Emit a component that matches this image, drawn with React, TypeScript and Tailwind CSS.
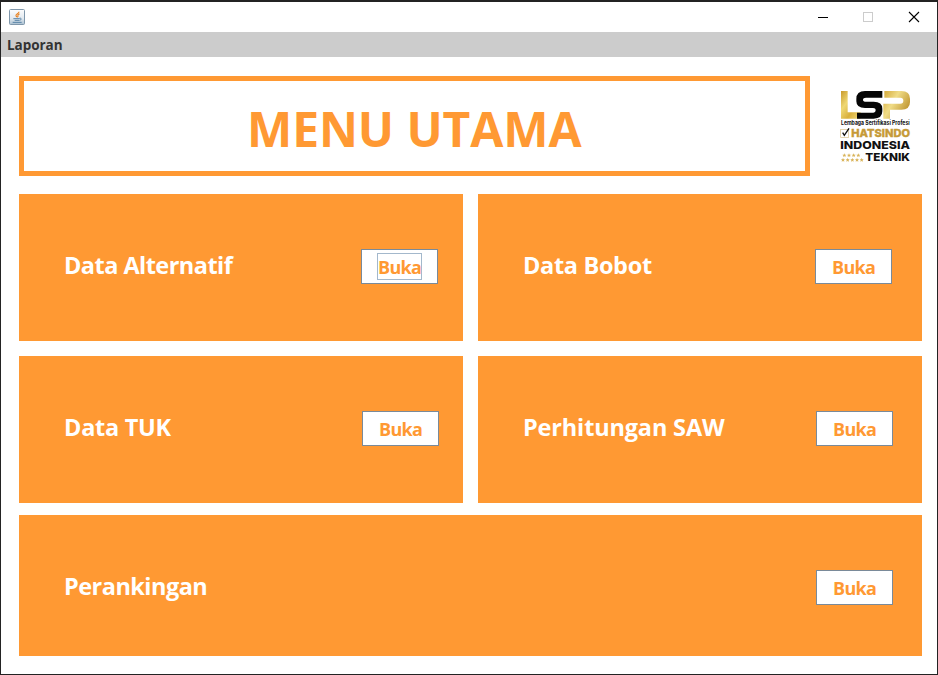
import React from "react";

const FONT = "font-['Open_Sans','Noto_Sans',sans-serif]";

function JavaIcon() {
  return (
    <svg width="16" height="16" viewBox="0 0 48 48" aria-hidden="true">
      <defs>
        <linearGradient id="java" x1="0" y1="0" x2="0" y2="1">
          <stop offset="0" stopColor="#fdfdfd" />
          <stop offset="0.6" stopColor="#e2e9ef" />
          <stop offset="1" stopColor="#a9bfd0" />
        </linearGradient>
      </defs>
      <rect x="1.5" y="1.5" width="45" height="45" rx="3" fill="url(#java)" stroke="#7f97ab" strokeWidth="3" />
      <path d="M30 8c0 5-10 7-9 12 0 2 3 3 3 5M32 15c-5 1-6 3-5 5 1 2 0 3-2 5" fill="none" stroke="#e8801f" strokeWidth="3.4" />
      <path d="M13 29h18M17 34h13M31 28c8-2 7 5 0 6M11 40h27" fill="none" stroke="#47759c" strokeWidth="2.6" />
    </svg>
  );
}

function Logo() {
  return (
    <svg className="shrink-0" width="90" height="90" viewBox="0 0 270 270" role="img" aria-label="LSP">
      <defs>
        <linearGradient id="goldL" x1="0" y1="0" x2="1" y2="1">
          <stop offset="0" stopColor="#c99a2c" />
          <stop offset="0.35" stopColor="#efd873" />
          <stop offset="0.65" stopColor="#d9b03c" />
          <stop offset="1" stopColor="#f1dc80" />
        </linearGradient>
        <linearGradient id="goldP" x1="0" y1="0" x2="1" y2="0.6">
          <stop offset="0" stopColor="#d2a637" />
          <stop offset="0.45" stopColor="#f0dc86" />
          <stop offset="1" stopColor="#bd922c" />
        </linearGradient>
      </defs>
      <path d="M33 33H53V97H92V116H33Z" fill="url(#goldL)" />
      <path d="M163 33H214Q240 33 240 56V66Q240 89 214 89H180V116H160V71H211Q220 71 220 62Q220 53 211 53H163Z" fill="url(#goldP)" />
      <path d="M157 33V53H108Q99 53 99 59Q99 65 108 65H131Q157 65 157 86V94Q157 116 131 116H81V98H130Q137 98 137 91Q137 84 129 84H105Q79 84 79 64V57Q79 33 105 33Z" fill="#050505" />
      <g className="font-['Inter',sans-serif]" fontWeight="800" fill="#111">
        <text x="33" y="134" fontSize="17" fontWeight="700" textLength="206" lengthAdjust="spacingAndGlyphs">Lembaga Sertifikasi Profesi</text>
        <text x="64" y="172" fontSize="32" fill="#c69a37" stroke="#c69a37" strokeWidth="1" textLength="176" lengthAdjust="spacingAndGlyphs">HATSINDO</text>
        <text x="31" y="208" fontSize="32" textLength="209" lengthAdjust="spacingAndGlyphs">INDONESIA</text>
        <text x="106" y="243" fontSize="32" textLength="134" lengthAdjust="spacingAndGlyphs">TEKNIK</text>
      </g>
      <rect x="32" y="148" width="24" height="24" fill="none" stroke="#d8c189" strokeWidth="2" />
      <path d="M38 158l5 8L57 145" fill="none" stroke="#111" strokeWidth="4" />
      <g fill="#d9b45a">
        {[43, 57, 71, 85].map((x) => (
          <path key={x} d={`M${x} 220l2 4h4l-3 3 1 4-4-2-4 2 1-4-3-3h4z`} />
        ))}
        {[39, 53, 67, 81, 95].map((x) => (
          <path key={x} d={`M${x} 234l2 4h4l-3 3 1 4-4-2-4 2 1-4-3-3h4z`} />
        ))}
      </g>
    </svg>
  );
}

function OpenButton({ focused = false }: { focused?: boolean }) {
  return (
    <button className="flex h-[35px] w-[77px] items-start justify-center border border-[#7a8a99] bg-white pt-[3px] text-[18px] font-bold leading-[27px] text-[#ff9933]">
      <span className={`h-[27px] w-[45px] border text-center tracking-[-0.7px] ${focused ? "border-[#a3b8cc]" : "border-transparent"}`}>Buka</span>
    </button>
  );
}

type CardProps = {
  label: string;
  size: string;
  tracking: string;
  focused?: boolean;
};

function Card({ label, size, tracking, focused }: CardProps) {
  return (
    <section className={`flex items-start justify-between bg-[#ff9933] pl-[45px] pt-[55px] ${size}`}>
      <h2 className={`whitespace-nowrap text-[23.5px] font-bold leading-[32px] text-white ${tracking}`}>{label}</h2>
      <OpenButton focused={focused} />
    </section>
  );
}

export default function App() {
  return (
    <div className={`flex h-[675px] w-[938px] flex-col overflow-hidden border border-t-2 border-[#232323] bg-white ${FONT}`}>
      <header className="flex h-[30px] shrink-0 items-center justify-between pl-2 pr-[17px]">
        <JavaIcon />
        <svg width="102" height="12" viewBox="0 0 102 12" fill="none" shapeRendering="crispEdges" aria-hidden="true">
          <path d="M0 6.5h10" stroke="#000" />
          <rect x="45.5" y="1.5" width="9" height="9" stroke="#cccccc" />
          <path d="M91 1l10 10M101 1L91 11" stroke="#000" shapeRendering="auto" strokeWidth="1.1" />
        </svg>
      </header>
      <nav className="flex h-[25px] shrink-0 items-center bg-[#cccccc] pl-1.5 pt-0.5 text-[13.5px] font-bold text-[#333333]">
        <span className="tracking-[-0.05px]">Laporan</span>
      </nav>
      <main className="flex flex-col pl-[18px] pt-[19px]">
        <div className="mb-[18px] flex h-[100px] items-start">
          <div className="flex h-[100px] w-[791px] items-center border-[5px] border-[#ff9933] pl-[223px] pt-[6px]">
            <h1 className="whitespace-nowrap text-[48px] font-bold leading-[60px] tracking-[-0.1px] text-[#ff9933]">MENU UTAMA</h1>
          </div>
          <div className="ml-5 mt-1">
            <Logo />
          </div>
        </div>
        <div className="mb-[15px] flex gap-[15px]">
          <Card label="Data Alternatif" size="h-[147px] w-[444px] pr-[25px]" tracking="tracking-[-0.54px]" focused />
          <Card label="Data Bobot" size="h-[147px] w-[444px] pr-[30px]" tracking="tracking-[-0.33px]" />
        </div>
        <div className="mb-3 flex gap-[15px]">
          <Card label="Data TUK" size="h-[147px] w-[444px] pr-[24px]" tracking="tracking-[-0.27px]" />
          <Card label="Perhitungan SAW" size="h-[147px] w-[444px] pr-[29px]" tracking="tracking-[-0.16px]" />
        </div>
        <Card label="Perankingan" size="h-[141px] w-[903px] pr-[29px]" tracking="tracking-[-0.53px]" />
      </main>
    </div>
  );
}
